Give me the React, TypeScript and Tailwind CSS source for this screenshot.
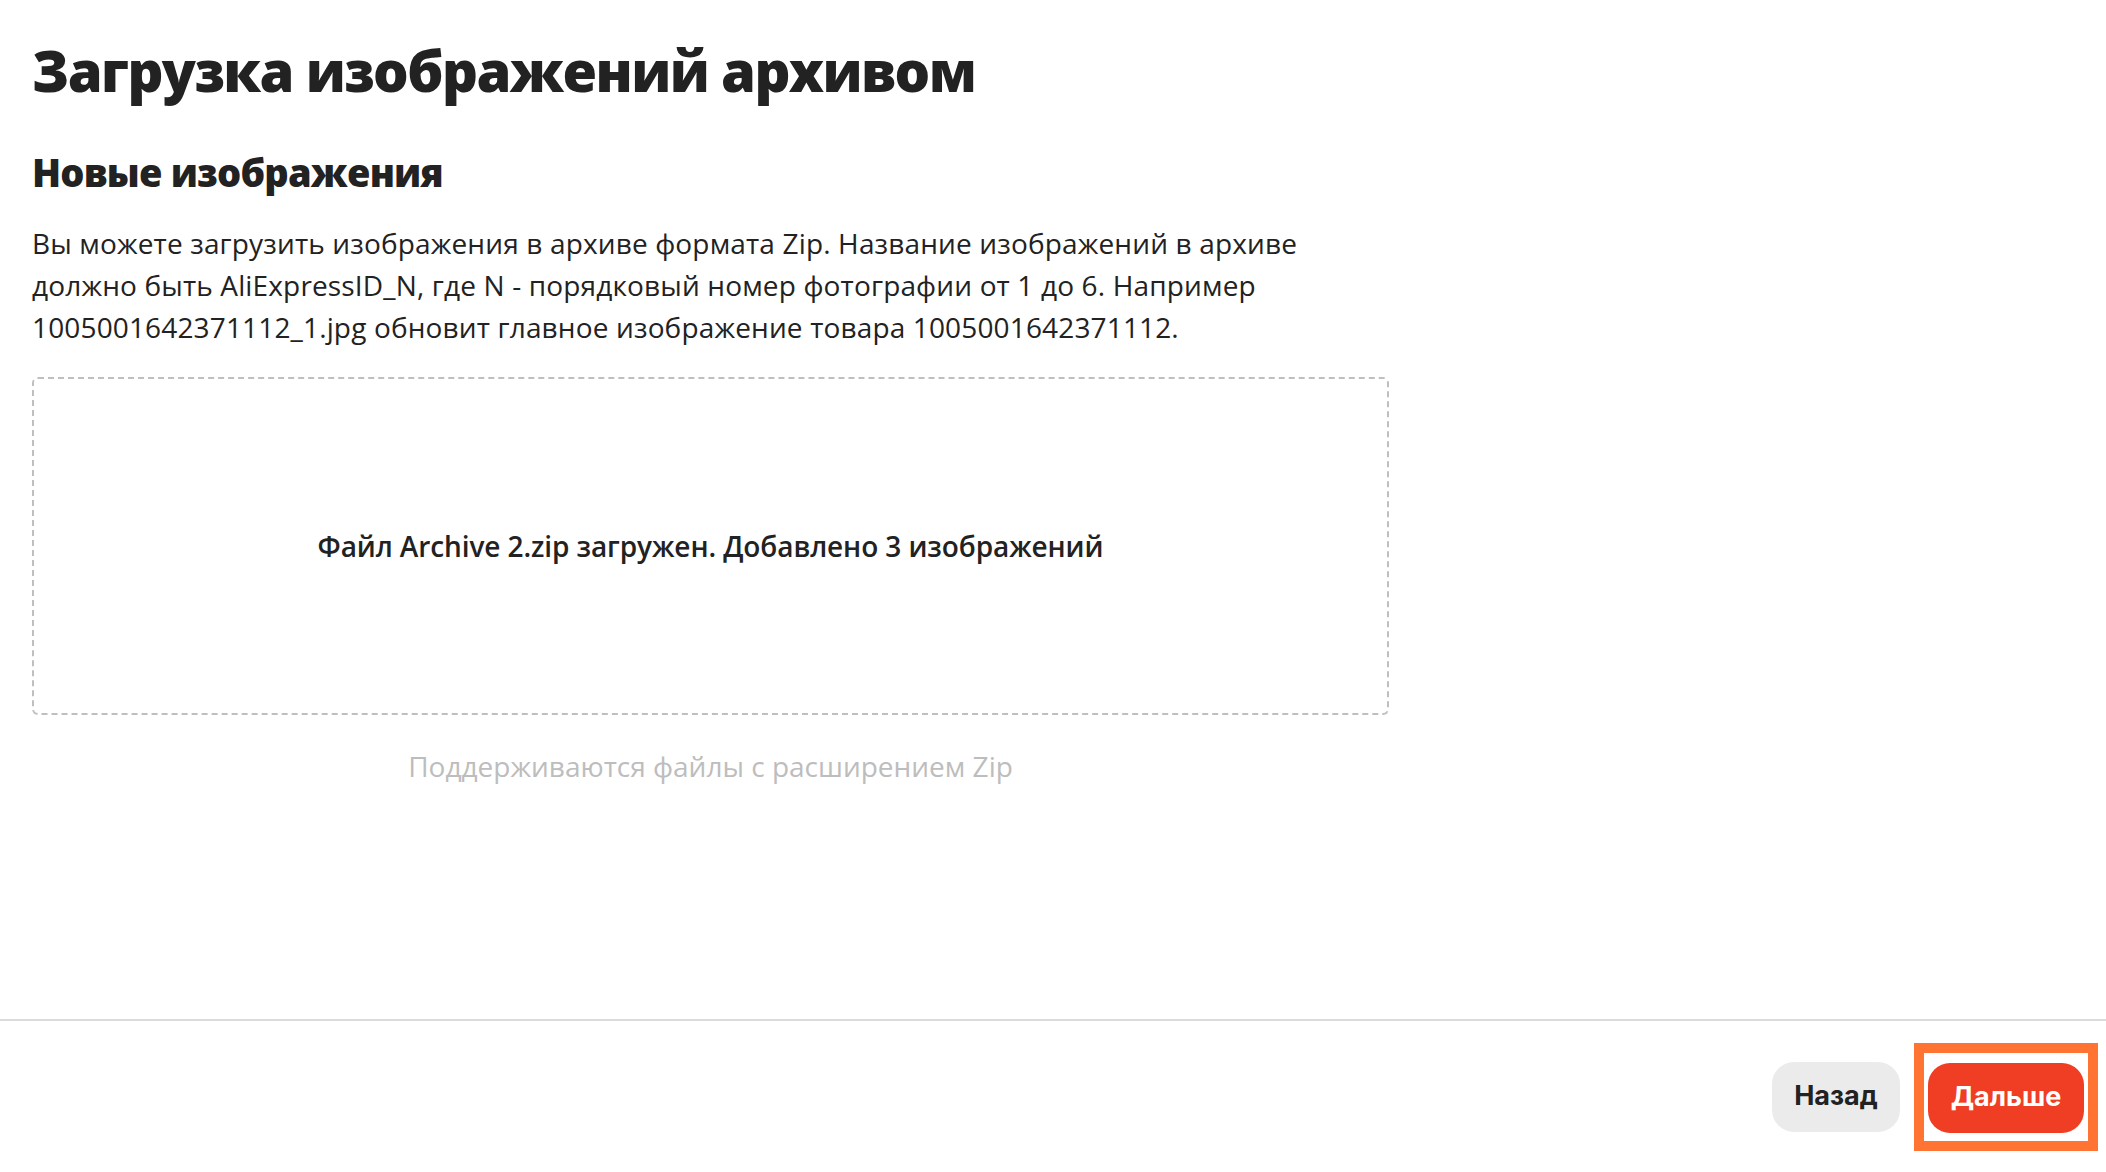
export default function App() {
  return (
    <div className="flex h-screen w-full flex-col bg-white text-[#222222]" style={{ fontFamily: '"Open Sans", "Noto Sans", sans-serif' }}>
      <main className="flex-1 pl-[32px] pt-[34px]">
        <h1 className="text-[56px] font-extrabold leading-[72px] tracking-[-1.6px]">Загрузка изображений архивом</h1>
        <h2 className="mt-[42px] text-[38px] font-extrabold leading-[48px] tracking-[-0.8px]">Новые изображения</h2>
        <p className="mt-[26px] max-w-[1340px] text-[28px] leading-[42px] tracking-[0.15px]">
          Вы можете загрузить изображения в архиве формата Zip. Название изображений в архиве должно быть AliExpressID_N, где N - порядковый номер фотографии от 1 до 6. Например 1005001642371112_1.jpg обновит главное изображение товара 1005001642371112.
        </p>
        <div className="w-[1357px]">
          <div className="mt-[29px] flex h-[338px] items-center justify-center rounded-[6px] border-2 border-dashed border-[#bfbfbf]">
            <span className="text-[28px] font-semibold tracking-[-0.1px]">Файл Archive 2.zip загружен. Добавлено 3 изображений</span>
          </div>
          <p className="mt-[31px] text-center text-[28px] leading-[40px] text-[#bdbdbd]">Поддерживаются файлы с расширением Zip</p>
        </div>
      </main>
      <footer className="flex h-[153px] items-center justify-end border-t-2 border-[#dcdcdc] pr-[8px]" style={{ fontFamily: 'Inter, "Open Sans", sans-serif' }}>
        <button className="h-[70px] w-[128px] rounded-[22px] bg-[#ebebeb] text-[27px] font-bold text-[#222222]">Назад</button>
        <div className="ml-[14px] border-[10px] border-[#ff7433] px-[4px] pb-[8px] pt-[10px]">
          <button className="h-[70px] w-[156px] rounded-[22px] bg-[#ef3e23] text-[27px] font-bold text-white">Дальше</button>
        </div>
      </footer>
    </div>
  );
}
